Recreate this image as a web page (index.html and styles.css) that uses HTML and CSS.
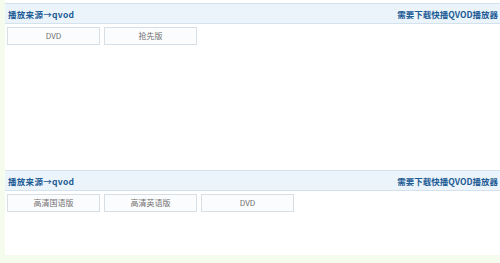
FILE: index.html
```html
<!DOCTYPE html>
<html lang="zh-CN">
<head>
<meta charset="UTF-8">
<title>播放来源</title>
<link rel="stylesheet" href="styles.css">
</head>
<body>
<div class="page">
    <div class="source">
        <div class="source-head">
            <span class="source-name">播放来源→qvod</span>
            <span class="player-link">需要下载快播QVOD播放器</span>
        </div>
        <div class="episodes">
            <a class="episode">DVD</a>
            <a class="episode">抢先版</a>
        </div>
    </div>
    <div class="source">
        <div class="source-head">
            <span class="source-name">播放来源→qvod</span>
            <span class="player-link">需要下载快播QVOD播放器</span>
        </div>
        <div class="episodes">
            <a class="episode">高清国语版</a>
            <a class="episode">高清英语版</a>
            <a class="episode">DVD</a>
        </div>
    </div>
</div>
</body>
</html>
```
FILE: styles.css
```css
body, html {
    margin: 0;
    height: 100%;
    background-color: #f5fcee;
    font-family: "Noto Sans CJK SC", "Liberation Sans", sans-serif;
}
.page {
    margin-left: 5px;
    height: 255px;
    background: #fff;
    padding-top: 3px;
    box-sizing: border-box;
    overflow: hidden;
}
.source:first-child {
    height: 167px;
}
.source-head {
    display: flex;
    justify-content: space-between;
    align-items: center;
    height: 19px;
    padding: 0 2px 0 3px;
    background: #eaf4fa;
    border-top: 1px solid #d3e2ec;
    border-bottom: 1px solid #d3e2ec;
    font-size: 8.5px;
    font-weight: bold;
    color: #1d5b95;
}
.source-name {
    letter-spacing: 0.3px;
}
.episodes {
    display: flex;
    gap: 4px;
    padding: 3px 0 0 2px;
}
.episode {
    width: 91px;
    height: 16px;
    line-height: 16px;
    text-align: center;
    border: 1px solid #d8dfe4;
    background: #fbfcfd;
    font-size: 8px;
    color: #6f6f6f;
}
```
